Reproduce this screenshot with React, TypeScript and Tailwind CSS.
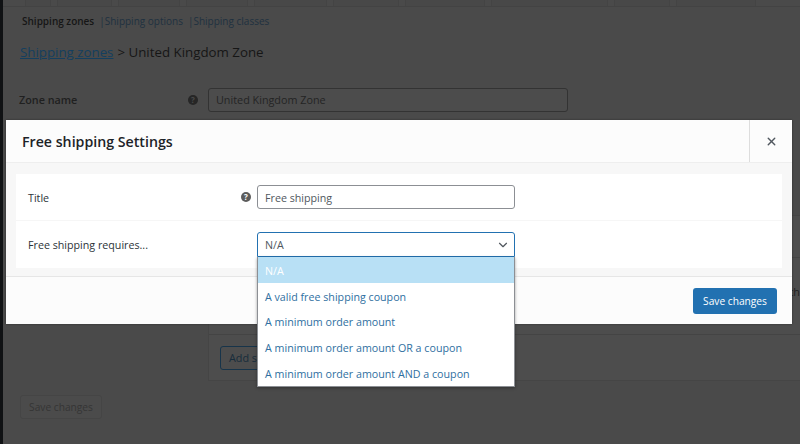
import React from "react"
import { ChevronDown, X } from "lucide-react"

const font = { fontFamily: '"Open Sans", "Noto Sans", sans-serif' }

const tabs = ["w-[26px]", "w-[55px]", "w-[62px]", "w-[62px]", "w-[73px]", "w-[66px]", "w-[80px]", "w-[117px]", "w-[56px]", "w-[80px]"]

const options = ["N/A", "A valid free shipping coupon", "A minimum order amount", "A minimum order amount OR a coupon", "A minimum order amount AND a coupon"]

const HelpIcon = ({ className }: { className: string }) => (
	<span className={`flex h-[10px] w-[10px] shrink-0 items-center justify-center rounded-full text-[8px] leading-none font-bold ${className}`}>?</span>
)

const Background = () => (
	<div className="flex h-[444px] w-[800px] overflow-hidden bg-[#4a4a4a]">
		<div className="w-[3px] shrink-0 bg-[#101214]" />
		<div className="min-w-0 flex-1">
			<div className="flex h-[7px] border-b border-[#434343] pl-[22px]">
				{tabs.map((tab, index) => (
					<div key={index} className={`mr-[6px] h-[6px] shrink-0 border-x border-[#444444] bg-[#484848] ${tab}`} />
				))}
			</div>
			<div className="mt-[7px] flex h-[14px] items-center pl-[19px] text-[10px] whitespace-nowrap">
				<span className="font-semibold text-[#161616]">Shipping zones</span>
				<span className="ml-[5px] text-[#1f3140]">|Shipping options</span>
				<span className="ml-[5px] text-[#1f3140]">|Shipping classes</span>
			</div>
			<div className="mt-[15px] flex h-[20px] items-center pl-[17px] text-[13.3px] whitespace-nowrap text-[#161616]">
				<span className="font-medium text-[#143f5f] underline">Shipping zones</span>
				<span className="ml-[4px] font-medium">&gt; United Kingdom Zone</span>
			</div>
			<div className="mt-[25px] flex h-[24px] items-center pl-[16px] text-[10.8px]">
				<span className="w-[169px] font-semibold text-[#202020]">Zone name</span>
				<HelpIcon className="bg-[#262626] text-[#4a4a4a]" />
				<div className="ml-[10px] flex h-[24px] w-[360px] items-center rounded-[3px] border border-[#333333] bg-[#4c4c4c] px-[7px] text-[#242424]">United Kingdom Zone</div>
			</div>
			<div className="mt-[103px] ml-[205px] h-[166px] border border-r-0 border-[#454545] bg-[#4d4d4d]">
				<div className="h-[42px] border-b border-[#444444]" />
				<div className="flex h-[77px] items-center justify-end border-b border-[#444444] pb-[7px] text-[10.8px] whitespace-nowrap text-[#1e1e1e]">
					<span>th</span>
				</div>
				<div className="pt-[11px] pl-[11px]">
					<div className="flex h-[24px] w-[120px] items-center rounded-[3px] border border-[#17344a] px-[8px] text-[10.8px] whitespace-nowrap text-[#172c3b]">Add shipping method</div>
				</div>
			</div>
			<div className="mt-[14px] ml-[17px] flex h-[24px] w-[82px] items-center justify-center rounded-[3px] border border-[#454545] bg-[#4b4b4b] pt-[2px] text-[10.2px] text-[#353535]">Save changes</div>
		</div>
	</div>
)

const App = () => {
	return (
		<div className="relative h-[444px] w-[800px] overflow-hidden" style={font}>
			<Background />
			<div className="absolute top-[120px] left-[6px] flex h-[204px] w-[786px] flex-col bg-[#fcfcfc] shadow-[0_0_2px_rgba(0,0,0,0.4)]">
				<div className="flex h-[43px] shrink-0 items-center justify-between border-b border-[#eeeeee] bg-[#fcfcfc]">
					<h1 className="pt-[2px] pl-[16px] text-[14.2px] font-semibold text-[#1d2327]">Free shipping Settings</h1>
					<div className="flex h-full w-[43px] items-center justify-center border-l border-[#dddddd]">
						<X size={13} strokeWidth={2.5} className="text-[#50575e]" />
					</div>
				</div>
				<div className="h-[114px] shrink-0 border-b border-[#e6e6e6] bg-[#f7f7f7] px-[10px] pt-[11px]">
					<div className="bg-white text-[10.7px] text-[#2c3338]">
						<div className="flex h-[47px] items-center border-b border-[#f6f6f6] pl-[12px]">
							<span className="w-[213px] pt-[2px]">Title</span>
							<HelpIcon className="bg-[#5c5c5c] text-white" />
							<div className="ml-[6px] flex h-[24px] w-[258px] items-center rounded-[3px] border border-[#8c8f94] px-[7px] pt-[2px] text-[#50575e]">Free shipping</div>
						</div>
						<div className="flex h-[47px] items-center pl-[12px]">
							<span className="w-[229px] pt-[2px]">Free shipping requires...</span>
							<div className="relative">
								<div className="flex h-[25px] w-[258px] items-center justify-between rounded-t-[3px] border border-[#2271b1] px-[7px] text-[#50575e]">
									<span className="pt-[2px]">N/A</span>
									<ChevronDown size={14} className="-mr-[3px] text-[#50575e]" />
								</div>
								<div className="absolute top-[25px] left-0 w-[258px] border border-t-0 border-[#8c8f94] bg-white shadow-[0_1px_3px_rgba(0,0,0,0.35)]">
									{options.map((option, index) => (
										<div key={option} className={`flex h-[25.8px] items-center px-[7px] pt-[2px] whitespace-nowrap ${index === 0 ? "bg-[#b8e0f5] text-white" : "text-[#2f6f9f]"}`}>
											{option}
										</div>
									))}
								</div>
							</div>
						</div>
					</div>
				</div>
				<div className="flex flex-1 items-center justify-end pr-[15px]">
					<div className="flex h-[26px] w-[84px] items-center justify-center rounded-[3px] bg-[#2271b1] pt-[2px] text-[10.2px] text-white">Save changes</div>
				</div>
			</div>
		</div>
	)
}

export default App
